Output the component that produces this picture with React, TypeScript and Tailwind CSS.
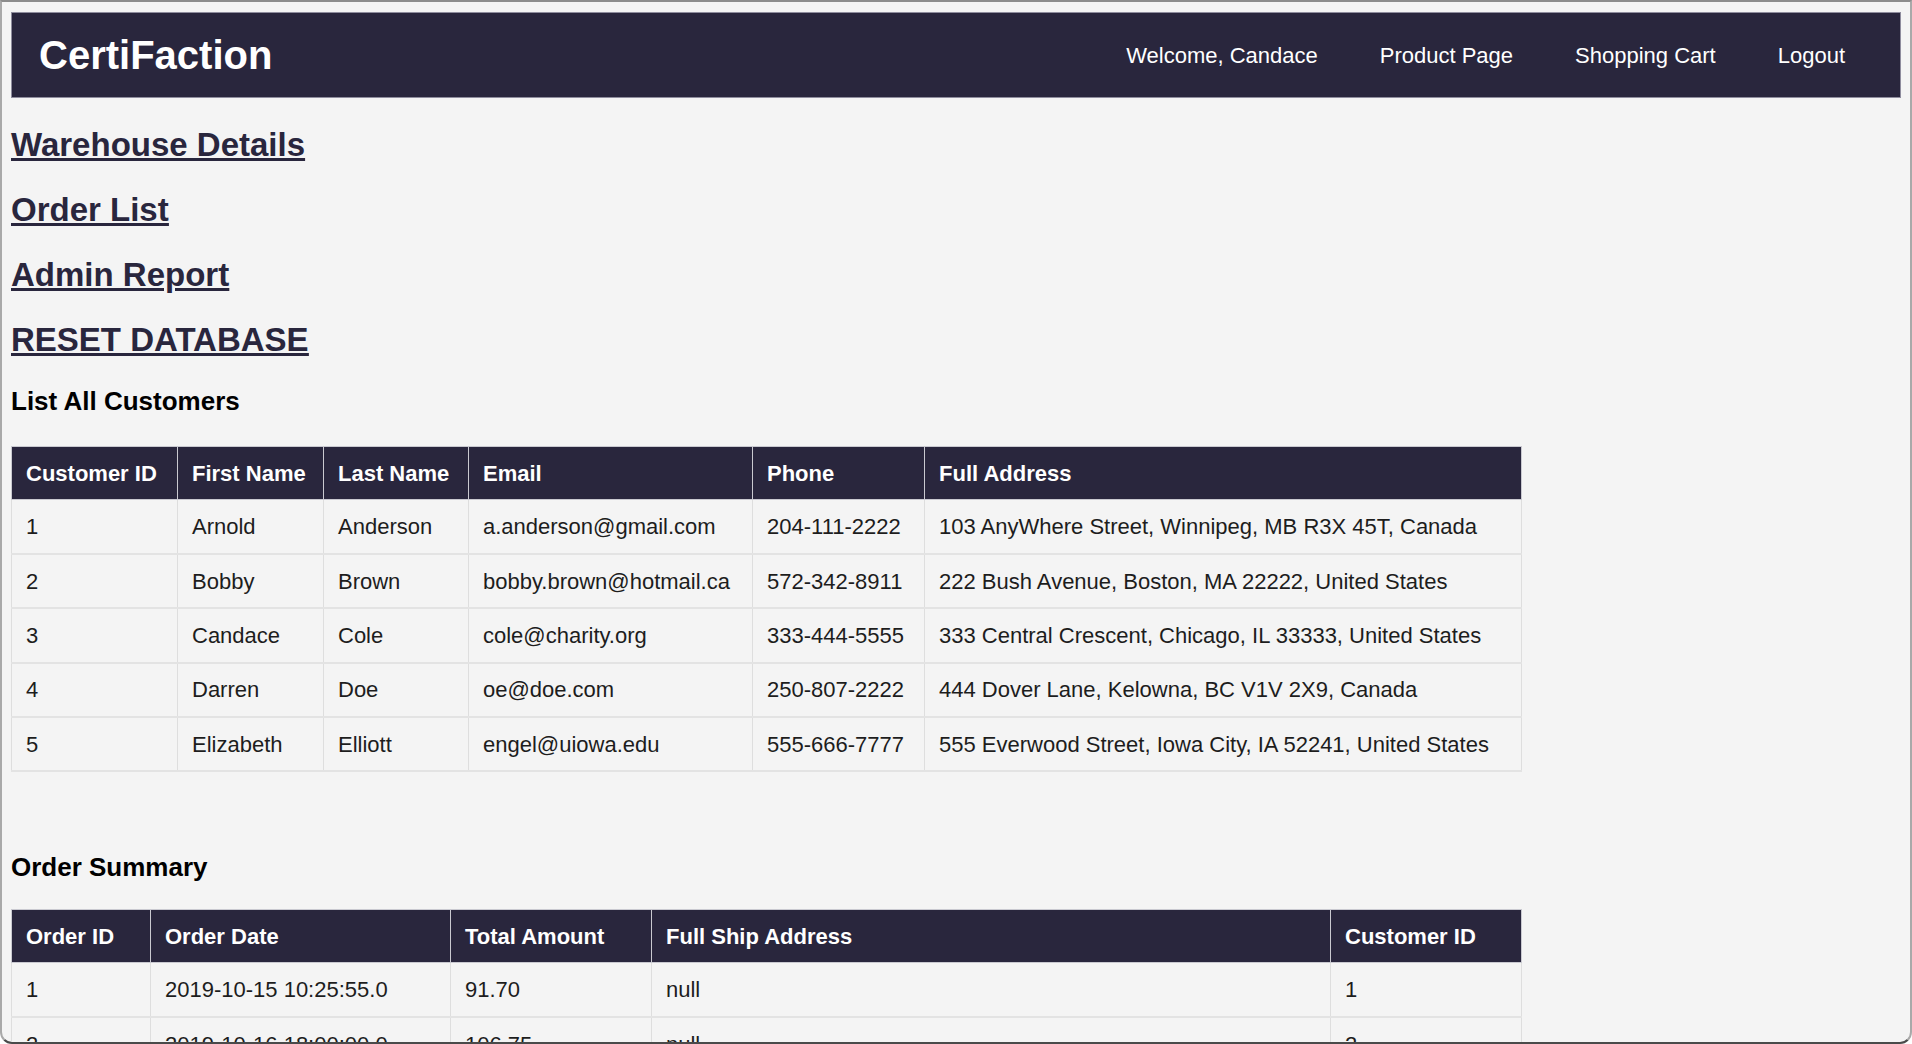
import React from 'react';

const customers = [
  ['1', 'Arnold', 'Anderson', 'a.anderson@gmail.com', '204-111-2222', '103 AnyWhere Street, Winnipeg, MB R3X 45T, Canada'],
  ['2', 'Bobby', 'Brown', 'bobby.brown@hotmail.ca', '572-342-8911', '222 Bush Avenue, Boston, MA 22222, United States'],
  ['3', 'Candace', 'Cole', 'cole@charity.org', '333-444-5555', '333 Central Crescent, Chicago, IL 33333, United States'],
  ['4', 'Darren', 'Doe', 'oe@doe.com', '250-807-2222', '444 Dover Lane, Kelowna, BC V1V 2X9, Canada'],
  ['5', 'Elizabeth', 'Elliott', 'engel@uiowa.edu', '555-666-7777', '555 Everwood Street, Iowa City, IA 52241, United States'],
];

const orders = [
  ['1', '2019-10-15 10:25:55.0', '91.70', 'null', '1'],
  ['2', '2019-10-16 18:00:00.0', '106.75', 'null', '2'],
  ['3', '2019-10-15 03:52:44.0', '140.00', 'null', '3'],
];

const customerCols = ['w-[166px]', 'w-[146px]', 'w-[145px]', 'w-[284px]', 'w-[172px]', 'w-[597px]'];
const orderCols = ['w-[139px]', 'w-[300px]', 'w-[201px]', 'w-[679px]', 'w-[191px]'];

interface DataTableProps {
  headers: string[];
  rows: string[][];
  cols: string[];
}

const DataTable: React.FC<DataTableProps> = ({ headers, rows, cols }) => {
  return (
    <table className="w-[1510px] table-fixed border-collapse text-[22px]">
      <colgroup>
        {cols.map((c, i) => (
          <col key={i} className={c} />
        ))}
      </colgroup>
      <thead>
        <tr>
          {headers.map((h) => (
            <th
              key={h}
              className="h-[53px] border border-[#c9c9d0] bg-[#29263d] px-[14px] text-left align-middle font-bold text-white"
            >
              {h}
            </th>
          ))}
        </tr>
      </thead>
      <tbody>
        {rows.map((r, i) => (
          <tr key={i} className="border-b-2 border-[#e3e3e3]">
            {r.map((cell, j) => (
              <td
                key={j}
                className="h-[54.4px] border-x border-[#dedede] px-[14px] align-middle text-[#1d1d1d]"
              >
                {cell}
              </td>
            ))}
          </tr>
        ))}
      </tbody>
    </table>
  );
};

const App: React.FC = () => {
  return (
    <div className="h-[1044px] w-[1912px] overflow-hidden rounded-b-[12px] border-x-2 border-t-2 border-b-2 border-x-[#a9a9a9] border-t-[#8c8c8c] border-b-[#4a4a4a] bg-[#f4f4f4] font-['Liberation_Sans',_Arial,_sans-serif]">
      <div className="px-[9px] pt-[10px]">
        <nav className="flex h-[86px] items-center border border-[#8f8d9e] bg-[#29263d] pl-[27px] pr-[24px] text-white">
          <div className="text-[40px] font-bold">CertiFaction</div>
          <div className="ml-auto flex items-center text-[22px]">
            <a className="px-[31px]">Welcome, Candace</a>
            <a className="px-[31px]">Product Page</a>
            <a className="px-[31px]">Shopping Cart</a>
            <a className="px-[31px]">Logout</a>
          </div>
        </nav>

        <div className="mt-[28px] flex flex-col gap-[27px]">
          <h2 className="text-[33px] leading-[38px] font-bold text-[#29263d] underline">
            <a>Warehouse Details</a>
          </h2>
          <h2 className="text-[33px] leading-[38px] font-bold text-[#29263d] underline">
            <a>Order List</a>
          </h2>
          <h2 className="text-[33px] leading-[38px] font-bold text-[#29263d] underline">
            <a>Admin Report</a>
          </h2>
          <h2 className="text-[33px] leading-[38px] font-bold text-[#29263d] underline">
            <a>RESET DATABASE</a>
          </h2>
        </div>

        <h3 className="mt-[27px] text-[26px] leading-[30px] font-bold text-black">List All Customers</h3>
        <div className="mt-[30px]">
          <DataTable
            headers={['Customer ID', 'First Name', 'Last Name', 'Email', 'Phone', 'Full Address']}
            rows={customers}
            cols={customerCols}
          />
        </div>

        <h3 className="mt-[80px] text-[26px] leading-[30px] font-bold text-black">Order Summary</h3>
        <div className="mt-[27px]">
          <DataTable
            headers={['Order ID', 'Order Date', 'Total Amount', 'Full Ship Address', 'Customer ID']}
            rows={orders}
            cols={orderCols}
          />
        </div>
      </div>
    </div>
  );
};

export default App;
